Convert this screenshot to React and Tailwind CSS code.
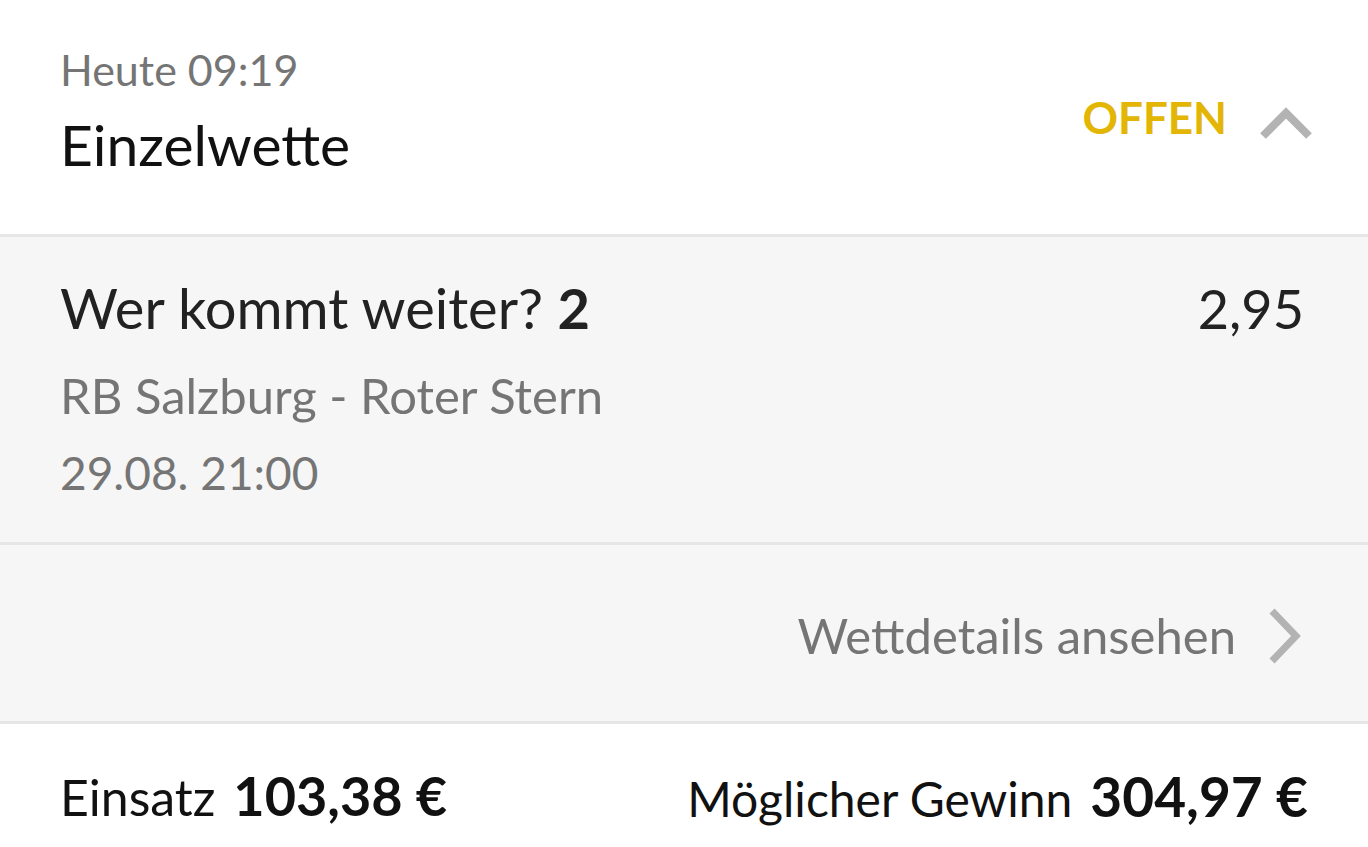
import { useState } from 'react';

function ChevronUp() {
    return (
        <svg width="54" height="36" viewBox="0 0 54 36" className="block">
            <path d="M4 32 L27 9 L50 32" fill="none" stroke="#b3b3b3" strokeWidth="8" />
        </svg>
    );
}

function ChevronRight() {
    return (
        <svg width="34" height="56" viewBox="0 0 34 56" className="block">
            <path d="M4 3 L28 28 L4 53" fill="none" stroke="#b3b3b3" strokeWidth="7" />
        </svg>
    );
}

export default function App() {
    const [open, setOpen] = useState(true);

    return (
        <div className="w-[1368px] h-[847px] bg-white overflow-hidden font-['Lato','Liberation_Sans',sans-serif]">
            {/* Header */}
            <div
                className="h-[234px] pl-[60px] pr-[55px] flex items-start justify-between cursor-pointer"
                onClick={() => setOpen(!open)}
            >
                <div className="flex flex-col pt-[45px]">
                    <span className="text-[43px] leading-[50px] text-[#757575]">Heute 09:19</span>
                    <span className="text-[57px] leading-[70px] text-[#111] mt-[14px]">Einzelwette</span>
                </div>
                <div className="flex items-start gap-[32px] pt-[87px]">
                    <span className="text-[44px] leading-[60px] font-bold text-[#e3b505]">OFFEN</span>
                    <div className="mt-[17px]">
                        <ChevronUp />
                    </div>
                </div>
            </div>

            {/* Selection */}
            <div className="border-t-[3px] border-[#e6e6e6] bg-[#f6f6f6] h-[308px] px-[60px] pt-[37px]">
                <div className="flex justify-between items-baseline">
                    <span className="text-[56px] leading-[68px] text-[#222]">
                        Wer kommt weiter? <span className="font-bold">2</span>
                    </span>
                    <span className="text-[54px] leading-[68px] text-[#222] pr-[4px]">2,95</span>
                </div>
                <div className="text-[49px] leading-[60px] text-[#757575] mt-[22px]">RB Salzburg - Roter Stern</div>
                <div className="text-[46px] leading-[60px] text-[#757575] mt-[18px]">29.08. 21:00</div>
            </div>

            {/* Details link */}
            <div className="border-t-[3px] border-[#e6e6e6] bg-[#f6f6f6] h-[179px] pl-[60px] pr-[66px] pt-[6px] flex items-center justify-end gap-[32px]">
                <span className="text-[49px] text-[#757575]">Wettdetails ansehen</span>
                <ChevronRight />
            </div>

            {/* Footer */}
            <div className="border-t-[3px] border-[#e6e6e6] bg-white h-[123px] px-[60px] pt-[39px] flex items-start justify-between">
                <div className="flex items-baseline gap-[18px] leading-[66px]">
                    <span className="text-[50px] text-[#111]">Einsatz</span>
                    <span className="text-[54px] font-bold text-[#111]">103,38 €</span>
                </div>
                <div className="flex items-baseline gap-[18px] leading-[66px]">
                    <span className="text-[48px] text-[#111]">Möglicher Gewinn</span>
                    <span className="text-[55px] font-bold text-[#111]">304,97 €</span>
                </div>
            </div>
        </div>
    );
}
